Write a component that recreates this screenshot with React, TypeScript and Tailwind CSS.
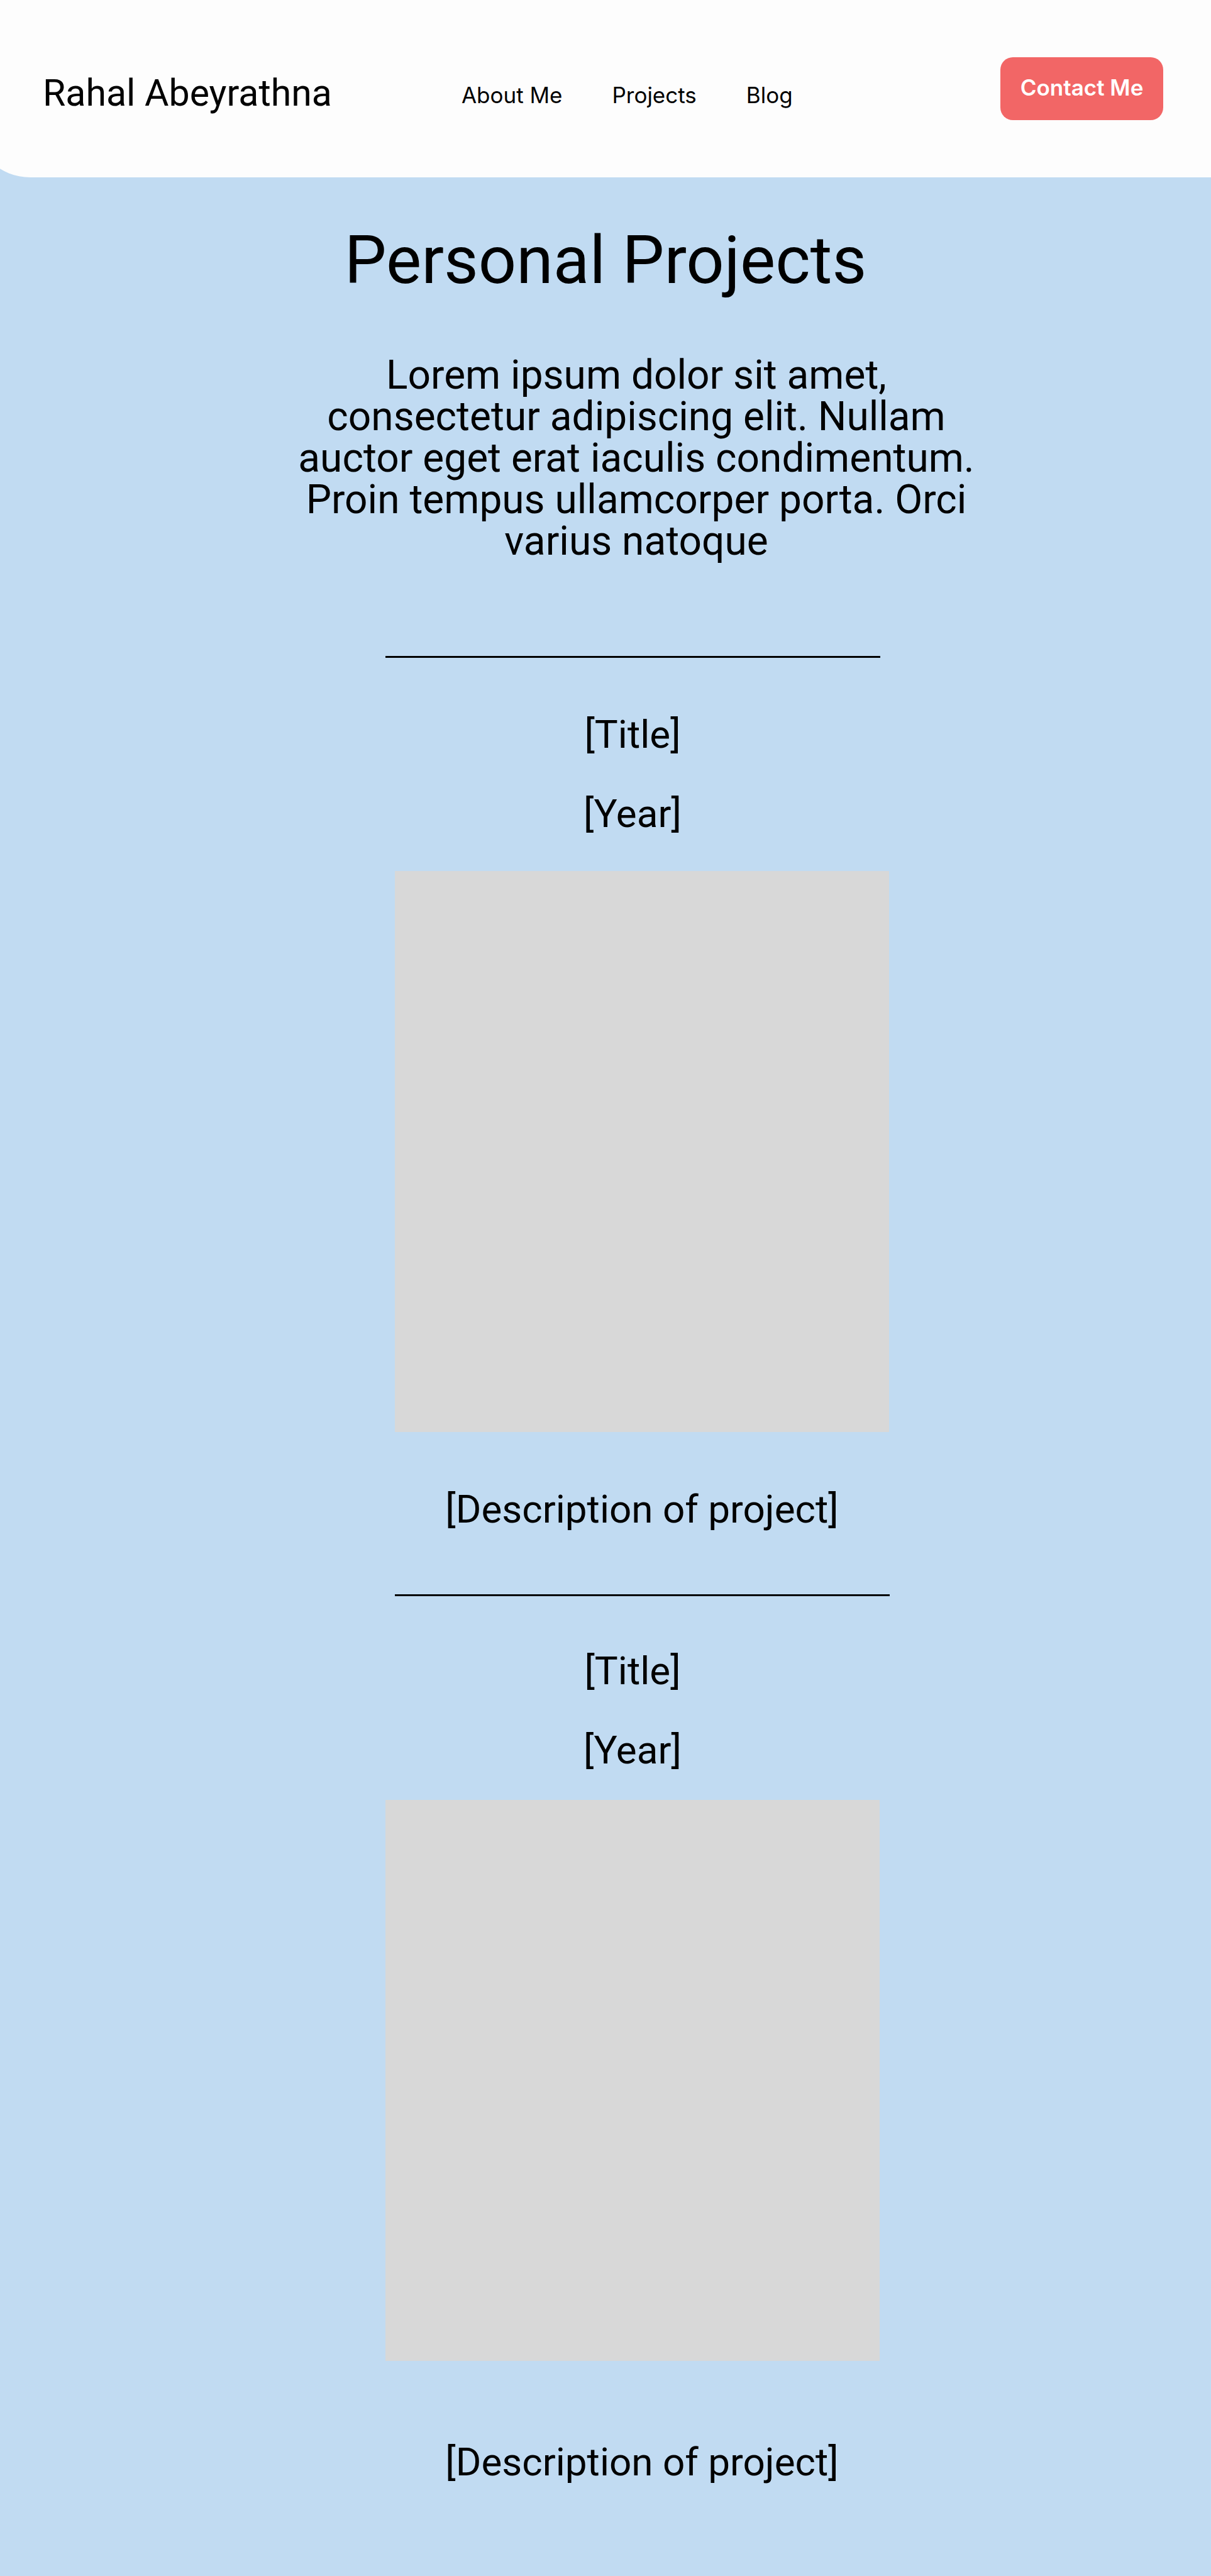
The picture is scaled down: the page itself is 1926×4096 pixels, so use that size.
const navLinks = [
  { label: "About Me", href: "#about" },
  { label: "Projects", href: "#projects" },
  { label: "Blog", href: "#blog" },
];

function Header() {
  return (
    <header className="-ml-[42px] rounded-bl-[90px] bg-[#fdfdfd]">
      <div className="flex h-[282px] items-start pl-[110px] pr-[76px]">
        <a href="#home" className="mt-[112px] whitespace-nowrap text-[59px] leading-[72px]">
          Rahal Abeyrathna
        </a>
        <nav className="ml-[206px] mt-[129px] flex gap-[79px] whitespace-nowrap font-['Inter',sans-serif] text-[35px] leading-[44px]">
          {navLinks.map((link) => (
            <a key={link.label} href={link.href}>
              {link.label}
            </a>
          ))}
        </nav>
        <button
          type="button"
          className="ml-auto mt-[91px] h-[100px] w-[259px] whitespace-nowrap rounded-[20px] bg-[#f26666] pb-1 font-['Inter',sans-serif] text-[35px] font-semibold leading-[44px] text-white"
        >
          Contact Me
        </button>
      </div>
    </header>
  );
}

export default function App() {
  return (
    <div className="min-h-screen overflow-hidden bg-[#c1dbf2] font-['Roboto',sans-serif] text-black">
      <Header />
      <main className="pb-36 text-center">
        <h1 className="pt-[72px] text-[106px] leading-[120px]">Personal Projects</h1>
        <div className="mt-[90px] pl-[98px]">
          <p className="mx-auto max-w-[1100px] text-[64px] leading-[66px]">
            Lorem ipsum dolor sit amet, consectetur adipiscing elit. Nullam auctor eget erat iaculis
            condimentum. Proin tempus ullamcorper porta. Orci varius natoque
          </p>
        </div>

        <article className="mt-[149px] text-[62px] leading-[72px]">
          <div className="pl-[86px]">
            <hr className="mx-auto h-[3px] max-w-[787px] border-0 bg-black" />
            <h2 className="mt-[86px]">[Title]</h2>
            <p className="mt-[54px]">[Year]</p>
          </div>
          <div className="pl-[116px]">
            <div className="mx-auto mt-[55px] h-[892px] max-w-[786px] bg-[#d8d8d8]" />
            <p className="mt-[87px]">[Description of project]</p>
          </div>
        </article>

        <article className="mt-[99px] text-[62px] leading-[72px]">
          <div className="pl-[116px]">
            <hr className="mx-auto h-[3px] max-w-[787px] border-0 bg-black" />
          </div>
          <div className="pl-[86px]">
            <h2 className="mt-[83px]">[Title]</h2>
            <p className="mt-[54px]">[Year]</p>
            <div className="mx-auto mt-[43px] h-[892px] max-w-[786px] bg-[#d8d8d8]" />
          </div>
          <div className="pl-[116px]">
            <p className="mt-[125px]">[Description of project]</p>
          </div>
        </article>
      </main>
    </div>
  );
}
